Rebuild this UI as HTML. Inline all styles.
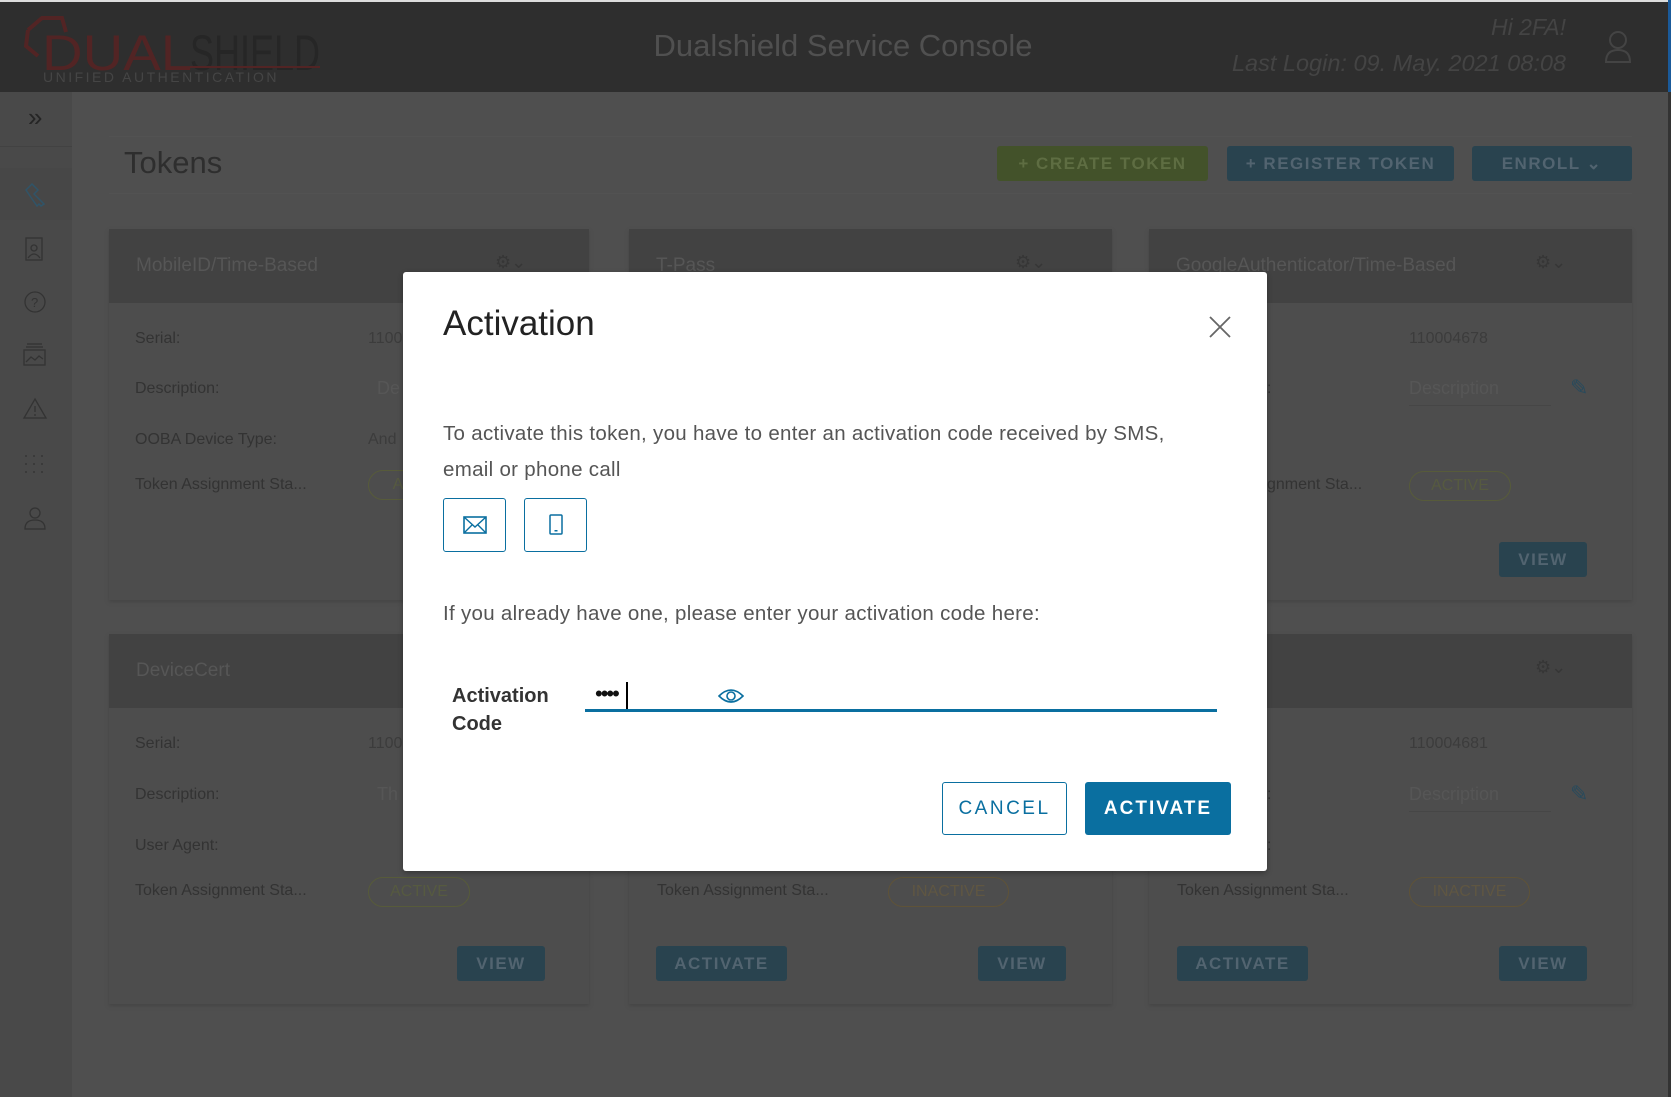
<!DOCTYPE html>
<html><head><meta charset="utf-8"><style>
*{box-sizing:border-box;margin:0;padding:0}
body{width:1671px;height:1097px;background:#4f4f4f;font-family:"Liberation Sans",sans-serif;position:relative;overflow:hidden}
.a{position:absolute}
.hdr{left:0;top:2px;width:1668px;height:90px;background:#2e2e2e}
.side{left:0;top:92px;width:72px;height:1005px;background:#494949}
.card{background:#4d4d4d;box-shadow:0 2px 3px #464646}
.ch{background:#424242;color:#565656;font-size:19px;padding-left:27px;line-height:74px}
.lbl{color:#333;font-size:16px}
.val{color:#3c3c3c;font-size:16px}
.btn{background:#29434f;color:#526470;font-size:17px;font-weight:bold;letter-spacing:1.5px;text-align:center;border-radius:3px}
.pill{border:1px solid #575b3a;border-radius:16px;color:#565a40;font-size:16px;text-align:center;height:30px;line-height:28px}
.pill.in{border-color:#5f5338;color:#5f5642}
.ic{stroke:#333;fill:none;stroke-width:1.3}
</style></head><body>
<div class="a" style="left:0;top:0;width:1671px;height:2px;background:#ddd"></div>
<div class="a hdr"></div>
<div class="a" style="right:0;top:0;width:3px;height:1097px;background:#333"></div>
<div class="a" style="left:1668px;top:0;width:3px;height:92px;background:#1a5a9a"></div>
<svg class="a" style="left:20px;top:12px" width="310" height="75">
<path d="M8 18 L22 6 L42 6 L46 20 M8 18 L6 34 L18 44" stroke="#522424" stroke-width="4" fill="none"/>
<text x="22" y="58" font-family="Liberation Sans" font-size="50" fill="#522424" textLength="150" lengthAdjust="spacingAndGlyphs">DUAL</text>
<text x="170" y="58" font-family="Liberation Sans" font-size="50" fill="#262626" textLength="130" lengthAdjust="spacingAndGlyphs">SHIELD</text>
<rect x="170" y="54" width="130" height="2" fill="#522424"/>
<text x="23" y="70" font-family="Liberation Sans" font-size="14" fill="#454545" letter-spacing="2.5">UNIFIED AUTHENTICATION</text>
</svg>
<div class="a" style="left:590px;top:28px;width:506px;text-align:center;color:#505050;font-size:31px">Dualshield Service Console</div>
<div class="a" style="right:105px;top:14px;color:#444;font-size:23px;font-style:italic;text-align:right">Hi 2FA!</div>
<div class="a" style="right:105px;top:50px;color:#444;font-size:23.5px;font-style:italic;text-align:right">Last Login: 09. May. 2021 08:08</div>
<svg class="a" style="left:1604px;top:30px" width="28" height="34"><circle cx="14" cy="10" r="8" class="ic" style="stroke:#444;stroke-width:2"/><path d="M2 32 Q2 20 14 20 Q26 20 26 32 Z" class="ic" style="stroke:#444;stroke-width:2"/></svg>
<div class="a side"></div>
<div class="a" style="left:0;top:92px;width:72px;height:55px;border-bottom:1px solid #424242"></div>
<div class="a" style="left:28px;top:102px;color:#252525;font-size:26px">»</div>
<div class="a" style="left:0;top:168px;width:72px;height:52px;background:#474747"></div>
<svg class="a" style="left:22px;top:180px" width="28" height="28"><path d="M4 10 L10 4 L16 10 L12 14 L22 24 L19 26 L17 24 L15 26 L8 16 Z" stroke="#305468" stroke-width="1.5" fill="none"/></svg>
<svg class="a" style="left:24px;top:234px" width="22" height="28"><rect x="2" y="4" width="16" height="22" class="ic"/><circle cx="10" cy="14" r="3" class="ic"/><path d="M4 24 Q10 16 16 24" class="ic"/></svg>
<svg class="a" style="left:22px;top:289px" width="26" height="26"><circle cx="13" cy="13" r="10" class="ic"/><text x="9" y="18" font-size="13" fill="#333">?</text></svg>
<svg class="a" style="left:22px;top:342px" width="26" height="26"><rect x="2" y="8" width="21" height="15" class="ic"/><path d="M4 5 H21 M5 2 H20 M4 20 L9 15 L13 18 L17 14 L21 17" class="ic"/></svg>
<svg class="a" style="left:22px;top:396px" width="26" height="26"><path d="M13 3 L24 22 H2 Z M13 10 V16 M13 18 V20" class="ic"/></svg>
<svg class="a" style="left:22px;top:452px" width="26" height="26"><path d="M3 4h4M11 4h4M19 4h4M3 12h4M11 12h4M19 12h4M3 20h4M11 20h4M19 20h4" class="ic" stroke-dasharray="2 2"/></svg>
<svg class="a" style="left:23px;top:505px" width="24" height="26"><circle cx="12" cy="8" r="5" class="ic"/><path d="M2 24 Q2 15 12 15 Q22 15 22 24 Z" class="ic"/></svg>
<div class="a" style="left:109px;top:136px;width:1523px;height:58px;border-top:1px solid #525252;border-bottom:1px solid #525252"></div>
<div class="a" style="left:124px;top:145px;color:#2e2e2e;font-size:31px">Tokens</div>
<div class="a btn" style="left:997px;top:146px;width:211px;height:35px;line-height:35px;background:#43522a;color:#5e6d42">+ CREATE TOKEN</div>
<div class="a btn" style="left:1227px;top:146px;width:227px;height:35px;line-height:35px">+ REGISTER TOKEN</div>
<div class="a btn" style="left:1472px;top:146px;width:160px;height:35px;line-height:35px">ENROLL ⌄</div>
<div class="a card" style="left:109px;top:229px;width:480px;height:371px"><div class="ch">MobileID/Time-Based</div></div>
<div class="a card" style="left:629px;top:229px;width:483px;height:371px"><div class="ch">T-Pass</div></div>
<div class="a card" style="left:1149px;top:229px;width:483px;height:371px"><div class="ch">GoogleAuthenticator/Time-Based</div></div>
<div class="a card" style="left:109px;top:634px;width:480px;height:370px"><div class="ch">DeviceCert</div></div>
<div class="a card" style="left:629px;top:634px;width:483px;height:370px"><div class="ch">&nbsp;</div></div>
<div class="a card" style="left:1149px;top:634px;width:483px;height:370px"><div class="ch">&nbsp;</div></div>
<div class="a" style="left:495px;top:252px;color:#363636;font-size:18px">⚙⌄</div>
<div class="a" style="left:1015px;top:252px;color:#363636;font-size:18px">⚙⌄</div>
<div class="a" style="left:1535px;top:252px;color:#363636;font-size:18px">⚙⌄</div>
<div class="a" style="left:1535px;top:657px;color:#363636;font-size:18px">⚙⌄</div>
<div class="a lbl" style="left:135px;top:330px">Serial:</div>
<div class="a val" style="left:368px;top:330px">1100</div>
<div class="a lbl" style="left:135px;top:380px">Description:</div>
<div class="a val" style="left:377px;top:378px;color:#565656;font-size:18px">De</div>
<div class="a lbl" style="left:135px;top:431px">OOBA Device Type:</div>
<div class="a val" style="left:368px;top:431px">And</div>
<div class="a lbl" style="left:135px;top:476px">Token Assignment Sta...</div>
<div class="a pill" style="left:368px;top:470px;width:60px">A</div>
<div class="a val" style="left:1409px;top:330px">110004678</div>
<div class="a" style="left:1409px;top:378px;color:#565656;font-size:18px;width:142px;border-bottom:1px solid #464646;padding-bottom:6px">Description</div>
<div class="a" style="left:1570px;top:375px;color:#284a5c;font-size:22px">✎</div>
<div class="a lbl" style="left:1267px;top:380px">:</div>
<div class="a lbl" style="left:1267px;top:476px">gnment Sta...</div>
<div class="a pill" style="left:1409px;top:471px;width:102px">ACTIVE</div>
<div class="a btn" style="left:1499px;top:542px;width:88px;height:35px;line-height:35px">VIEW</div>
<div class="a lbl" style="left:135px;top:735px">Serial:</div>
<div class="a val" style="left:368px;top:735px">1100</div>
<div class="a lbl" style="left:135px;top:786px">Description:</div>
<div class="a val" style="left:377px;top:784px;color:#565656;font-size:18px">Th</div>
<div class="a lbl" style="left:135px;top:837px">User Agent:</div>
<div class="a lbl" style="left:135px;top:882px">Token Assignment Sta...</div>
<div class="a pill" style="left:368px;top:877px;width:102px">ACTIVE</div>
<div class="a btn" style="left:457px;top:946px;width:88px;height:35px;line-height:35px">VIEW</div>
<div class="a lbl" style="left:657px;top:882px">Token Assignment Sta...</div>
<div class="a pill in" style="left:888px;top:877px;width:121px">INACTIVE</div>
<div class="a btn" style="left:656px;top:946px;width:131px;height:35px;line-height:35px">ACTIVATE</div>
<div class="a btn" style="left:978px;top:946px;width:88px;height:35px;line-height:35px">VIEW</div>
<div class="a val" style="left:1409px;top:735px">110004681</div>
<div class="a" style="left:1409px;top:784px;color:#565656;font-size:18px;width:142px;border-bottom:1px solid #464646;padding-bottom:6px">Description</div>
<div class="a" style="left:1570px;top:781px;color:#284a5c;font-size:22px">✎</div>
<div class="a lbl" style="left:1267px;top:786px">:</div>
<div class="a lbl" style="left:1267px;top:837px">:</div>
<div class="a lbl" style="left:1177px;top:882px">Token Assignment Sta...</div>
<div class="a pill in" style="left:1409px;top:877px;width:121px">INACTIVE</div>
<div class="a btn" style="left:1177px;top:946px;width:131px;height:35px;line-height:35px">ACTIVATE</div>
<div class="a btn" style="left:1499px;top:946px;width:88px;height:35px;line-height:35px">VIEW</div>
<div class="a" style="left:403px;top:272px;width:864px;height:599px;background:#fff;border-radius:3px;box-shadow:0 2px 6px rgba(0,0,0,.3)"></div>
<div class="a" style="left:443px;top:304px;font-size:35px;color:#222">Activation</div>
<svg class="a" style="left:1209px;top:316px" width="22" height="22"><path d="M1 1L21 21M21 1L1 21" stroke="#666" stroke-width="1.8"/></svg>
<div class="a" style="left:443px;top:416px;font-size:20.5px;color:#555;line-height:36px;letter-spacing:0.3px">To activate this token, you have to enter an activation code received by SMS,<br>email or phone call</div>
<div class="a" style="left:443px;top:498px;width:63px;height:54px;border:1px solid #0a6fa0;border-radius:3px"></div>
<svg class="a" style="left:463px;top:516px" width="24" height="18"><rect x="1" y="1" width="22" height="16" fill="none" stroke="#0a6fa0" stroke-width="1.6"/><path d="M1 1L12 11L23 1M1 17L9 9M23 17L15 9" fill="none" stroke="#0a6fa0" stroke-width="1.4"/></svg>
<div class="a" style="left:524px;top:498px;width:63px;height:54px;border:1px solid #0a6fa0;border-radius:3px"></div>
<svg class="a" style="left:549px;top:514px" width="14" height="22"><rect x="1" y="1" width="12" height="19" rx="1" fill="none" stroke="#0a6fa0" stroke-width="1.5"/><rect x="5.5" y="16" width="3" height="1.5" fill="#0a6fa0"/></svg>
<div class="a" style="left:443px;top:602px;font-size:20.5px;color:#555;letter-spacing:0.3px">If you already have one, please enter your activation code here:</div>
<div class="a" style="left:452px;top:682px;font-size:20px;color:#333;line-height:28px;font-weight:bold">Activation<br>Code</div>
<div class="a" style="left:595px;top:683px;font-size:22px;color:#111;letter-spacing:-2px;line-height:22px">••••</div>
<div class="a" style="left:626px;top:682px;width:2px;height:27px;background:#000"></div>
<svg class="a" style="left:718px;top:687px" width="26" height="18"><path d="M1 9 Q13 -3 25 9 Q13 21 1 9 Z" fill="none" stroke="#0a6fa0" stroke-width="1.6"/><circle cx="13" cy="9" r="4" fill="none" stroke="#0a6fa0" stroke-width="1.6"/></svg>
<div class="a" style="left:585px;top:709px;width:632px;height:3px;background:#0a6fa0"></div>
<div class="a" style="left:942px;top:782px;width:125px;height:53px;border:1px solid #0a6fa0;border-radius:3px;color:#0a6fa0;font-size:19px;letter-spacing:2.5px;text-align:center;line-height:51px">CANCEL</div>
<div class="a" style="left:1085px;top:782px;width:146px;height:53px;background:#0a6fa0;border-radius:3px;color:#fff;font-size:19px;font-weight:bold;letter-spacing:2px;text-align:center;line-height:53px">ACTIVATE</div>
</body></html>
